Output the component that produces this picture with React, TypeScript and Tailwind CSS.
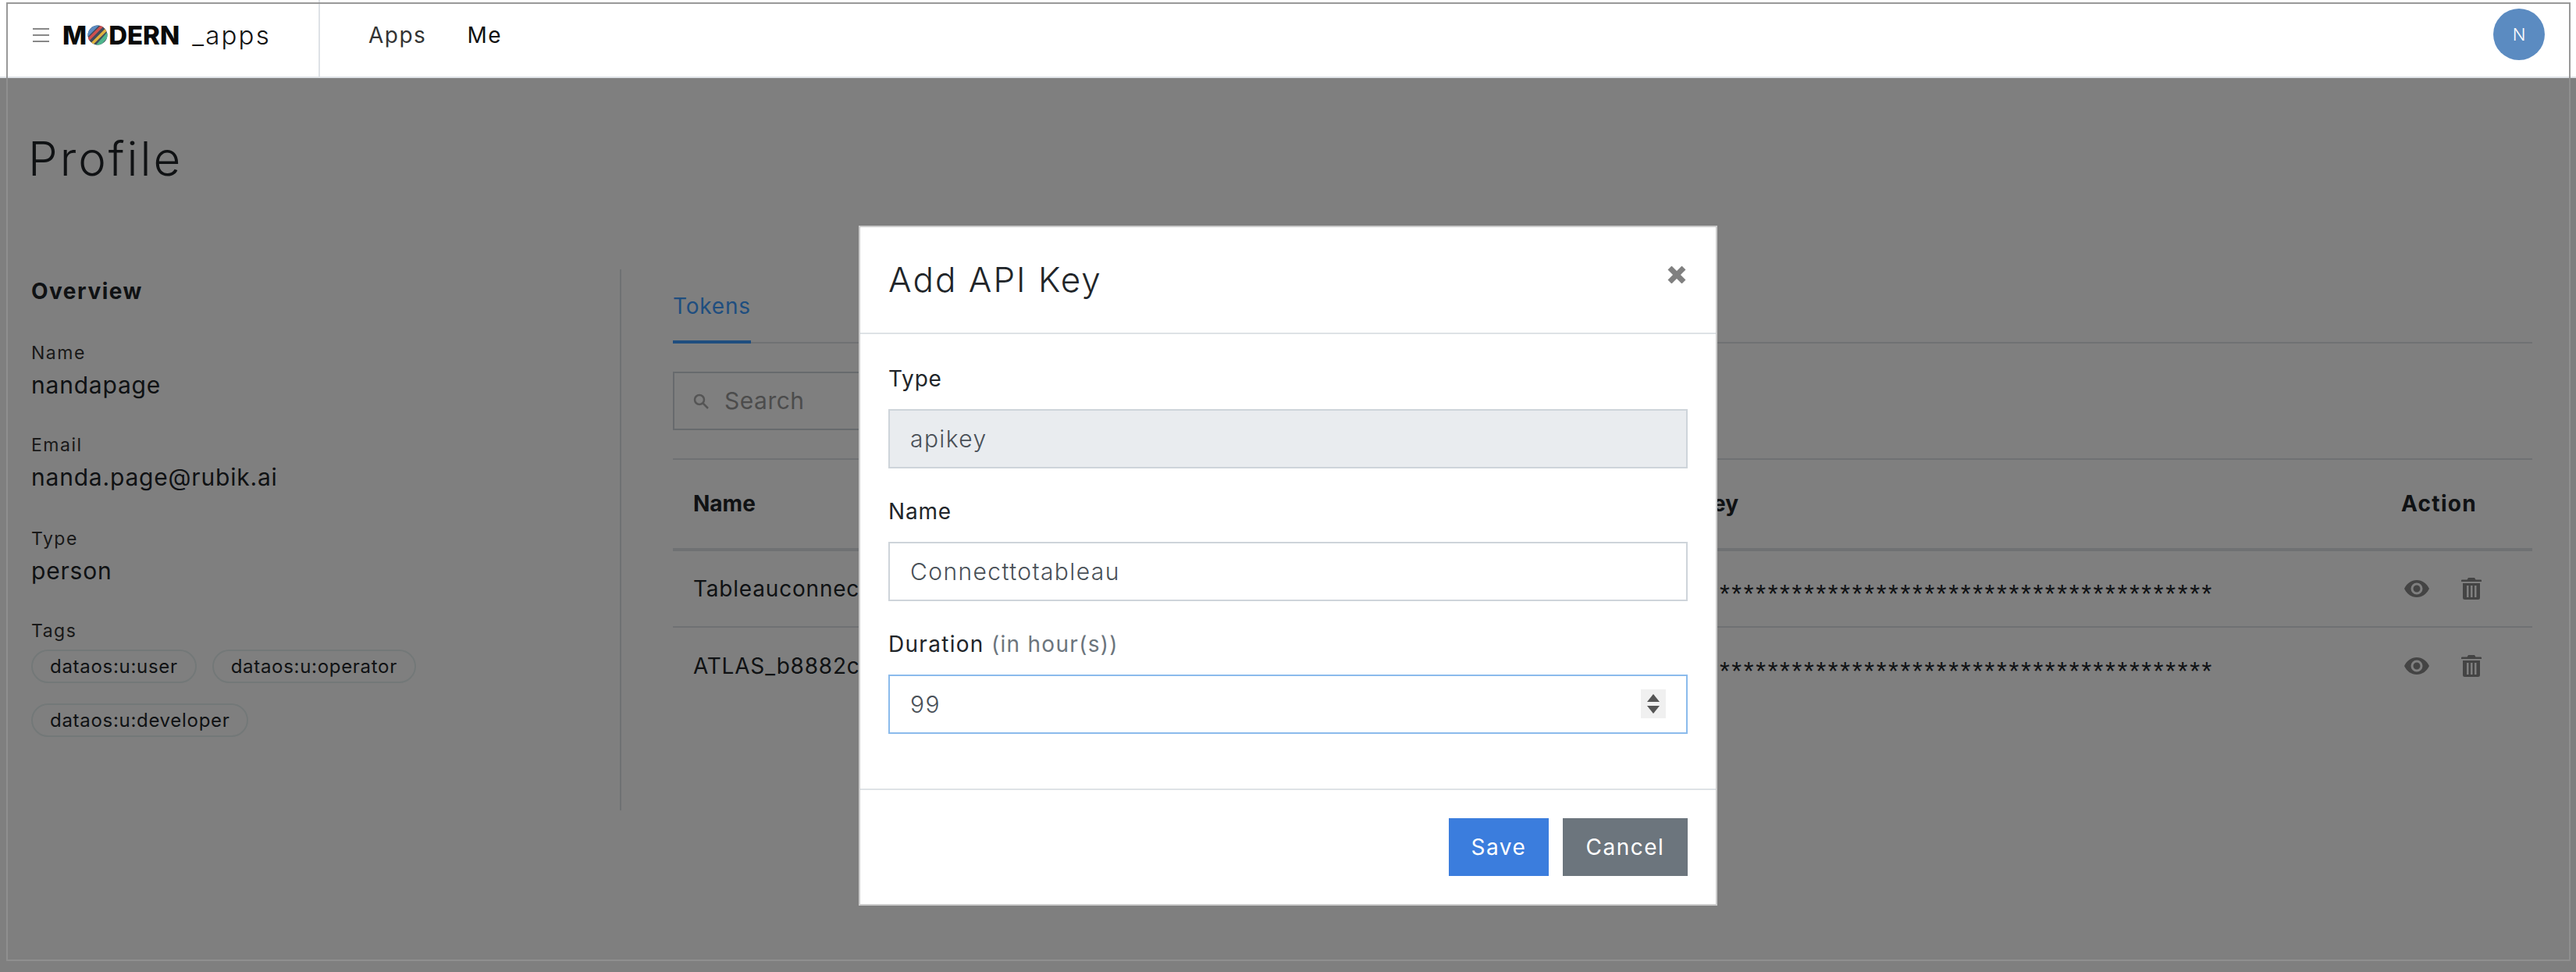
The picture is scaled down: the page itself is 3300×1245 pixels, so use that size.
import React from "react";

const Row = ({ name, last }: { name: string; last?: boolean }) => (
  <div className={`flex items-center h-[98px] text-[28px] text-[#212529] ${last ? "" : "border-b-2 border-[#dee2e6]"}`}>
    <div className="w-[1310px] pl-[26px] whitespace-nowrap tracking-[0.8px]">{name}</div>
    <div className="w-[878px] pt-[14px] font-['Liberation_Sans'] text-[33px] leading-[44px] tracking-[2.6px] whitespace-nowrap">{"*".repeat(43)}</div>
    <div className="flex items-center gap-[41px] pl-[30px]">
      <svg width="32" height="22" viewBox="0 0 32 22"><path fillRule="evenodd" fill="#888" d="M16 0C9 0 3.500 4 0 11c3.500 7 9 11 16 11s12.500-4 16-11C28.500 4 23 0 16 0Zm0 3.500a7.500 7.500 0 1 1 0 15 7.500 7.500 0 0 1 0-15Zm0 3a4.500 4.500 0 1 0 0 9 4.500 4.500 0 0 0 0-9Z" /></svg>
      <svg width="26" height="28" viewBox="0 0 26 28"><path fillRule="evenodd" fill="#888" d="M9 0h8l1.500 2.500H25a1 1 0 0 1 1 1V5H0V3.500a1 1 0 0 1 1-1h6.500ZM2 7h22v18.500a2.500 2.500 0 0 1-2.500 2.500h-17A2.500 2.500 0 0 1 2 25.500ZM7 10v15h2.500V10Zm5 0v15h2.500V10Zm5 0v15h2.500V10Z" /></svg>
    </div>
  </div>
);

const Field = ({ label, value, spaced }: { label: string; value: string; spaced?: boolean }) => (
  <div className={spaced ? "mb-[42px]" : "mb-[40px]"}>
    <div className="text-[23px] leading-[30px] tracking-[1.5px] text-[#333]">{label}</div>
    <div className="text-[30px] leading-[44px] mt-[4px] tracking-[0.8px] text-[#212529]">{value}</div>
  </div>
);

const Pill = ({ text }: { text: string }) => (
  <span className="inline-flex items-center h-[43px] px-[22px] rounded-full border-2 border-[#e6f0f0] text-[24px] tracking-[0.7px] text-[#212529]">{text}</span>
);

export default function App() {
  return (
    <div className="relative w-[3300px] h-[1245px] overflow-hidden bg-white font-['Inter',sans-serif]">
      {/* page header */}
      <header className="relative z-20 flex items-center h-[100px] bg-white border-b-2 border-[#dee2e6]">
        <div className="flex items-center shrink-0 w-[410px] h-full border-r-2 border-[#dee2e6] pl-[42px] pb-[8px]">
          <svg width="21" height="18" viewBox="0 0 21 18" className="mr-[17px] shrink-0"><path stroke="#888" strokeWidth="2" d="M0 1h21M0 9h21M0 17h21" /></svg>
          <span className="text-[33px] font-extrabold text-[#0a0a0a] leading-none">M</span>
          <svg width="26" height="26" viewBox="0 0 26 26" className="mx-[1px] shrink-0">
            <defs><clipPath id="c"><circle cx="13" cy="13" r="12.500" /></clipPath></defs>
            <g clipPath="url(#c)">
              <rect width="26" height="26" fill="#3f4a5c" />
              <path d="M-2 14L14-2" stroke="#5b8bc1" strokeWidth="5" />
              <path d="M0 20L20 0" stroke="#d0504f" strokeWidth="3.500" />
              <path d="M6 24L26 4" stroke="#e0b23f" strokeWidth="3.500" />
              <path d="M12 28L28 10" stroke="#4fb58c" strokeWidth="5" />
            </g>
          </svg>
          <span className="text-[33px] font-extrabold text-[#0a0a0a] leading-none">DERN</span>
          <span className="text-[33px] font-light text-[#111] leading-none ml-[16px] tracking-[2.2px]">_apps</span>
        </div>
        <nav className="flex items-center gap-[52px] pl-[62px] pb-[8px] text-[28px] tracking-[1.5px]">
          <span className="text-[#333]">Apps</span>
          <span className="text-[#111]">Me</span>
        </nav>
        <div className="ml-auto mr-[40px] mb-[10px] w-[66px] h-[66px] rounded-full bg-[#5b8bc1] flex items-center justify-center text-white text-[22px] font-light">N</div>
      </header>

      {/* page content */}
      <main className="pl-[40px]">
        <h1 className="text-[60px] leading-[70px] font-light text-[#212529] mt-[68px] -ml-[4px] tracking-[3px]">Profile</h1>
        <div className="flex mt-[107px]">
          <aside className="w-[756px] h-[693px] border-r-2 border-[#dee2e6] shrink-0 pt-[10px]">
            <div className="text-[28px] font-bold leading-[36px] tracking-[1.5px] text-[#212529] mb-[46px]">Overview</div>
            <Field label="Name" value="nandapage" />
            <Field label="Email" value="nanda.page@rubik.ai" spaced />
            <Field label="Type" value="person" />
            <div className="text-[23px] leading-[30px] tracking-[1.5px] text-[#333] mt-[5px]">Tags</div>
            <div className="flex flex-wrap gap-x-[20px] gap-y-[26px] mt-[9px] w-[600px]">
              <Pill text="dataos:u:user" />
              <Pill text="dataos:u:operator" />
              <Pill text="dataos:u:developer" />
            </div>
          </aside>
          <section className="ml-[66px] w-[2382px]">
            <div className="border-b-2 border-[#dee2e6] h-[95px]">
              <div className="inline-flex items-center h-[95px] w-[100px] pt-[3px] border-b-4 border-[#3f9cff] text-[#3f9cff] text-[28px] tracking-[0.8px]">Tokens</div>
            </div>
            <div className="mt-[36px] flex items-center h-[75px] w-[1000px] border-2 border-[#ced4da] pl-[24px]">
              <svg width="20" height="20" viewBox="0 0 20 20" fill="none" stroke="#aaa" strokeWidth="2.500"><circle cx="8" cy="8" r="6" /><path d="M12.500 12.500L19 19" /></svg>
              <span className="ml-[20px] text-[30px] tracking-[0.5px] text-[#999]">Search</span>
            </div>
            <div className="mt-[36px] border-t-2 border-[#dee2e6] flex items-center h-[119px] pb-[2px] border-b-4 text-[28px] font-bold text-[#212529]">
              <div className="w-[1310px] pl-[26px]">Name</div>
              <div className="w-[878px] pl-[3px]">Key</div>
              <div className="pl-[26px] tracking-[1.3px]">Action</div>
            </div>
            <Row name="Tableauconnect" />
            <Row name="ATLAS_b8882c" last />
          </section>
        </div>
      </main>

      {/* backdrop */}
      <div className="absolute inset-0 z-10 bg-black/50" />

      {/* modal */}
      <div className="absolute z-30 left-[1100px] top-[289px] w-[1100px] h-[871px] bg-white border-2 border-black/20 flex flex-col text-[#212529]">
        <div className="relative h-[137px] shrink-0 border-b-2 border-[#dee2e6] flex items-center pl-[36px] pb-[2px]">
          <span className="text-[44px] font-light tracking-[2px]">Add API Key</span>
          <svg width="24" height="22" viewBox="0 0 24 22" className="absolute right-[38px] top-[50px]"><path stroke="#808080" strokeWidth="7" d="M3 2L21 20M21 2L3 20" /></svg>
        </div>
        <div className="flex-1 px-[36px]">
          <label className="block text-[28px] leading-[40px] tracking-[0.8px] mt-[37px] mb-[19px]">Type</label>
          <input readOnly value="apikey" className="block w-full h-[76px] border-2 border-[#ced4da] bg-[#e9ecef] px-[26px] text-[30px] font-light tracking-[1.4px] text-[#495057] outline-none" />
          <label className="block text-[28px] leading-[40px] tracking-[0.8px] mt-[35px] mb-[19px]">Name</label>
          <input readOnly value="Connecttotableau" className="block w-full h-[76px] border-2 border-[#ced4da] bg-white px-[26px] text-[30px] font-light tracking-[1.4px] text-[#495057] outline-none" />
          <label className="block text-[28px] leading-[40px] tracking-[1.3px] mt-[35px] mb-[19px]">Duration <span className="text-[#6c757d]">(in hour(s))</span></label>
          <div className="relative">
            <input readOnly value="99" className="block w-full h-[76px] border-2 border-[#8bbbec] bg-white px-[26px] text-[30px] font-light tracking-[1.4px] text-[#495057] outline-none" />
            <div className="absolute right-[28px] top-[19px] w-[32px] h-[37px] bg-[#f0f0f0] flex flex-col items-center justify-center gap-[5px]">
              <span className="w-0 h-0 border-x-[8px] border-x-transparent border-b-[10px] border-b-[#555]" />
              <span className="w-0 h-0 border-x-[8px] border-x-transparent border-t-[10px] border-t-[#555]" />
            </div>
          </div>
        </div>
        <div className="h-[148px] shrink-0 border-t-2 border-[#dee2e6] flex items-start justify-end gap-[18px] pt-[36px] pr-[36px]">
          <button className="w-[128px] h-[74px] bg-[#3b7ddd] text-white text-[28px] tracking-[1.5px]">Save</button>
          <button className="w-[160px] h-[74px] bg-[#6c757d] text-white text-[28px] tracking-[1.5px]">Cancel</button>
        </div>
      </div>

      {/* window frame */}
      <div className="absolute z-40 left-[8px] top-[3px] w-[3285px] h-[1228px] border-2 border-[#909090eb] pointer-events-none" />
    </div>
  );
}
